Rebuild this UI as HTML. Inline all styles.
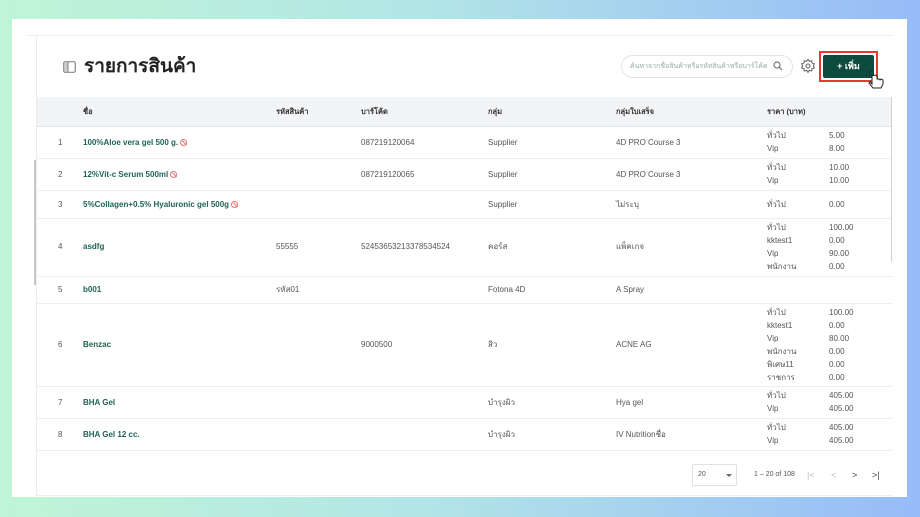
<!DOCTYPE html>
<html><head><meta charset="utf-8"><style>
*{margin:0;padding:0;box-sizing:border-box}
body{width:920px;height:517px;overflow:hidden;background:linear-gradient(90deg,#bff5d6 0%,#b2e6e6 45%,#97bbf8 100%);font-family:"Liberation Sans","Noto Sans CJK SC",sans-serif;color:#444;font-size:8px;position:relative}
.card{position:absolute;left:12px;top:19px;width:895px;height:478px;background:#fff}
.topline{position:absolute;left:28px;top:35px;width:864px;height:1px;background:#eee}
.leftline{position:absolute;left:36px;top:36px;width:1px;height:460px;background:#ececec}
.t{position:absolute;white-space:nowrap;line-height:10px;height:10px}
.title{left:84px;top:56px;font-size:19px;font-weight:bold;color:#222;line-height:22px;height:22px}
.hdr{position:absolute;left:37px;top:97px;width:855px;height:30px;background:#f3f4f6;border-bottom:1px solid #e5e7eb}
.hdr span{position:absolute;top:10px;font-weight:bold;color:#333;font-size:7.5px;line-height:10px;height:10px}
.row{position:absolute;left:37px;width:855px;border-bottom:1px solid #eceef1}
.row .t{font-size:8px;color:#555}
.nm{color:#1f6355!important;font-weight:bold}
.ban{display:inline-block;width:7px;height:7px;border:1px solid #e57373;border-radius:50%;margin-left:2px;vertical-align:-1px;position:relative}
.ban:after{content:"";position:absolute;left:2.5px;top:-0.5px;width:1px;height:6px;background:#e57373;transform:rotate(-45deg)}
.search{position:absolute;left:621px;top:55px;width:172px;height:23px;border:1px solid #dfe3e8;border-radius:12px;font-size:7px;color:#9aa;padding:0 8px;line-height:21px}
.btn{position:absolute;left:823px;top:55px;width:51px;height:23px;background:#0d4b3e;border-radius:2px;color:#fff;font-size:9px;font-weight:bold;text-align:center;line-height:23px}
.redbox{position:absolute;left:819px;top:51px;width:59px;height:31px;border:2px solid #e53935}
</style></head><body>
<div class="card"></div>
<div class="topline"></div>
<div class="leftline"></div>
<svg style="position:absolute;left:63px;top:61px" width="13" height="12" viewBox="0 0 13 12"><rect x="0.7" y="0.7" width="11.6" height="10.6" rx="1.5" fill="none" stroke="#888" stroke-width="1.2"/><rect x="1.3" y="1.3" width="3.5" height="9.4" fill="#ccc"/><line x1="5" y1="1" x2="5" y2="11" stroke="#888" stroke-width="1.1"/></svg>
<div class="t title">รายการสินค้า</div>
<div class="search">ค้นหาจากชื่อสินค้าหรือรหัสสินค้าหรือบาร์โค้ด</div>
<svg style="position:absolute;left:773px;top:61px" width="10" height="10" viewBox="0 0 10 10"><circle cx="4" cy="4" r="3" fill="none" stroke="#777" stroke-width="1.2"/><line x1="6.3" y1="6.3" x2="9" y2="9" stroke="#777" stroke-width="1.2"/></svg>
<svg style="position:absolute;left:800px;top:58px" width="16" height="16" viewBox="0 0 24 24" fill="none" stroke="#666" stroke-width="1.6"><circle cx="12" cy="12" r="3"/><path d="M12 2l2 3 3.5-1 .5 3.5 3.5 1-1.5 3.5 1.5 3-3.5 1-.5 3.5-3.5-1-2 3-2-3-3.5 1-.5-3.5-3.5-1 1.5-3-1.5-3.5 3.5-1 .5-3.5 3.5 1z"/></svg>
<div class="btn">+ เพิ่ม</div>
<div class="redbox"></div>
<svg style="position:absolute;left:866px;top:70px" width="20" height="20" viewBox="0 0 20 20"><path d="M6 6v8l-2-2-1 1 4 5h8l2-4v-4l-2-1-1 1-1-1-2 0v-3l-2-1z" fill="#fff" stroke="#222" stroke-width="1"/><path d="M2 1l2 2M6 0v2M0 5h2" stroke="#222" stroke-width="0.8"/></svg>

<div class="hdr">
<span style="left:46px">ชื่อ</span><span style="left:239px">รหัสสินค้า</span><span style="left:324px">บาร์โค้ด</span><span style="left:451px">กลุ่ม</span><span style="left:579px">กลุ่มใบเสร็จ</span><span style="left:730px">ราคา (บาท)</span>
</div>

<div class="row" style="top:127px;height:32px">
<div class="t" style="left:21px;top:11px">1</div><div class="t nm" style="left:46px;top:11px">100%Aloe vera gel 500 g.<span class="ban"></span></div>
<div class="t" style="left:324px;top:11px">087219120064</div><div class="t" style="left:451px;top:11px">Supplier</div><div class="t" style="left:579px;top:11px">4D PRO Course 3</div>
<div class="t" style="left:730px;top:4px">ทั่วไป</div><div class="t" style="left:792px;top:4px">5.00</div>
<div class="t" style="left:730px;top:17px">Vip</div><div class="t" style="left:792px;top:17px">8.00</div></div>

<div class="row" style="top:159px;height:32px">
<div class="t" style="left:21px;top:11px">2</div><div class="t nm" style="left:46px;top:11px">12%Vit-c Serum 500ml<span class="ban"></span></div>
<div class="t" style="left:324px;top:11px">087219120065</div><div class="t" style="left:451px;top:11px">Supplier</div><div class="t" style="left:579px;top:11px">4D PRO Course 3</div>
<div class="t" style="left:730px;top:4px">ทั่วไป</div><div class="t" style="left:792px;top:4px">10.00</div>
<div class="t" style="left:730px;top:17px">Vip</div><div class="t" style="left:792px;top:17px">10.00</div></div>

<div class="row" style="top:191px;height:28px">
<div class="t" style="left:21px;top:9px">3</div><div class="t nm" style="left:46px;top:9px">5%Collagen+0.5% Hyaluronic gel 500g<span class="ban"></span></div>
<div class="t" style="left:451px;top:9px">Supplier</div><div class="t" style="left:579px;top:9px">ไม่ระบุ</div>
<div class="t" style="left:730px;top:9px">ทั่วไป</div><div class="t" style="left:792px;top:9px">0.00</div></div>

<div class="row" style="top:219px;height:58px">
<div class="t" style="left:21px;top:23px">4</div><div class="t nm" style="left:46px;top:23px">asdfg</div>
<div class="t" style="left:239px;top:23px">55555</div><div class="t" style="left:324px;top:23px">52453653213378534524</div><div class="t" style="left:451px;top:23px">คอร์ส</div><div class="t" style="left:579px;top:23px">แพ็คเกจ</div>
<div class="t" style="left:730px;top:4px">ทั่วไป</div><div class="t" style="left:792px;top:4px">100.00</div>
<div class="t" style="left:730px;top:17px">kktest1</div><div class="t" style="left:792px;top:17px">0.00</div>
<div class="t" style="left:730px;top:30px">Vip</div><div class="t" style="left:792px;top:30px">90.00</div>
<div class="t" style="left:730px;top:43px">พนักงาน</div><div class="t" style="left:792px;top:43px">0.00</div></div>

<div class="row" style="top:277px;height:27px">
<div class="t" style="left:21px;top:8px">5</div><div class="t nm" style="left:46px;top:8px">b001</div>
<div class="t" style="left:239px;top:8px">รหัส01</div><div class="t" style="left:451px;top:8px">Fotona 4D</div><div class="t" style="left:579px;top:8px">A Spray</div></div>

<div class="row" style="top:304px;height:83px">
<div class="t" style="left:21px;top:36px">6</div><div class="t nm" style="left:46px;top:36px">Benzac</div>
<div class="t" style="left:324px;top:36px">9000500</div><div class="t" style="left:451px;top:36px">สิว</div><div class="t" style="left:579px;top:36px">ACNE AG</div>
<div class="t" style="left:730px;top:4px">ทั่วไป</div><div class="t" style="left:792px;top:4px">100.00</div>
<div class="t" style="left:730px;top:17px">kktest1</div><div class="t" style="left:792px;top:17px">0.00</div>
<div class="t" style="left:730px;top:30px">Vip</div><div class="t" style="left:792px;top:30px">80.00</div>
<div class="t" style="left:730px;top:43px">พนักงาน</div><div class="t" style="left:792px;top:43px">0.00</div>
<div class="t" style="left:730px;top:56px">พิเศษ11</div><div class="t" style="left:792px;top:56px">0.00</div>
<div class="t" style="left:730px;top:69px">ราชการ</div><div class="t" style="left:792px;top:69px">0.00</div></div>

<div class="row" style="top:387px;height:32px">
<div class="t" style="left:21px;top:11px">7</div><div class="t nm" style="left:46px;top:11px">BHA Gel</div>
<div class="t" style="left:451px;top:11px">บำรุงผิว</div><div class="t" style="left:579px;top:11px">Hya gel</div>
<div class="t" style="left:730px;top:4px">ทั่วไป</div><div class="t" style="left:792px;top:4px">405.00</div>
<div class="t" style="left:730px;top:17px">Vip</div><div class="t" style="left:792px;top:17px">405.00</div></div>

<div class="row" style="top:419px;height:32px">
<div class="t" style="left:21px;top:11px">8</div><div class="t nm" style="left:46px;top:11px">BHA Gel 12 cc.</div>
<div class="t" style="left:451px;top:11px">บำรุงผิว</div><div class="t" style="left:579px;top:11px">IV Nutritionชื่อ</div>
<div class="t" style="left:730px;top:4px">ทั่วไป</div><div class="t" style="left:792px;top:4px">405.00</div>
<div class="t" style="left:730px;top:17px">Vip</div><div class="t" style="left:792px;top:17px">405.00</div></div>

<div style="position:absolute;left:34px;top:160px;width:2px;height:125px;background:#c8c8c8"></div>
<div style="position:absolute;left:891px;top:97px;width:1px;height:165px;background:#d0d0d0"></div>

<div style="position:absolute;left:692px;top:464px;width:45px;height:22px;border:1px solid #dde1e6;border-radius:2px;font-size:7px;color:#555;padding:0 5px;line-height:20px">20</div>
<div style="position:absolute;left:726px;top:474px;width:0;height:0;border-left:3px solid transparent;border-right:3px solid transparent;border-top:3px solid #666"></div>
<div class="t" style="left:754px;top:470px;font-size:7px;color:#555">1 – 20 of 108</div>
<div class="t" style="left:807px;top:470px;font-size:9px;color:#bbb">|&lt;</div>
<div class="t" style="left:831px;top:470px;font-size:9px;color:#bbb">&lt;</div>
<div class="t" style="left:852px;top:470px;font-size:9px;color:#444">&gt;</div>
<div class="t" style="left:872px;top:470px;font-size:9px;color:#444">&gt;|</div>
<div style="position:absolute;left:37px;top:495px;width:855px;height:1px;background:#eee"></div>
</body></html>
